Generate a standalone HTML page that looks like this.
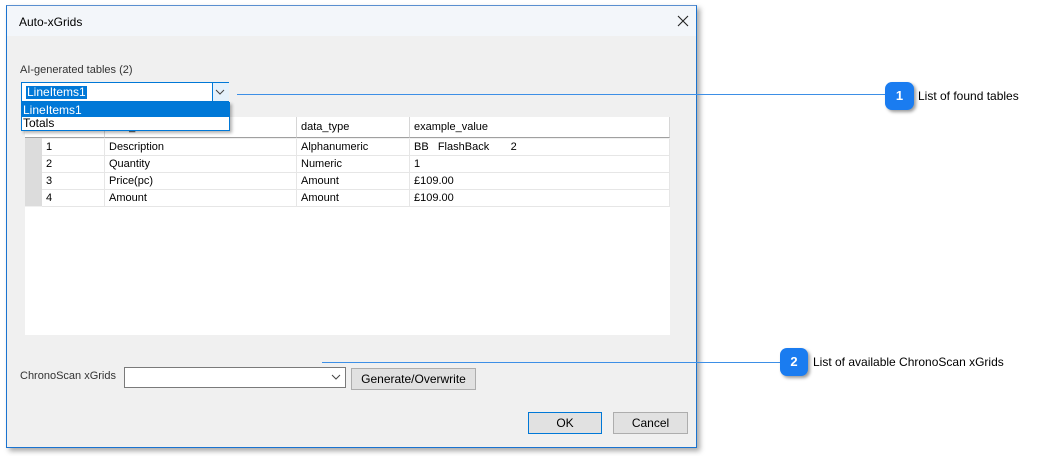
<!DOCTYPE html>
<html><head><style>
body{margin:0;width:1042px;height:456px;background:#fff;position:relative;overflow:hidden;font-family:"Liberation Sans",sans-serif;font-size:11px;color:#000}
.a{position:absolute}
.dlg{left:6px;top:5px;width:689px;height:441px;background:#f0f0f0;border:1px solid #1a73d0;border-top-color:#5a8fd0;box-shadow:3px 3px 5px rgba(0,0,0,.35)}
.title{left:0;top:0;width:689px;height:30px;background:#f3f6fa}
.grid{left:18px;top:111px;width:645px;height:218px;background:#f0f0f0}
.cell{position:absolute;height:17px;line-height:17px;padding-left:4px;box-sizing:border-box;background:#fff;border-right:1px solid #e6e6e6;border-bottom:1px solid #e6e6e6}
.hd{position:absolute;height:21px;line-height:21px;padding-left:4px;box-sizing:border-box;background:#fff;border-right:1px solid #d6d6d6;border-bottom:1px solid #a0a0a0}
.btn{position:absolute;background:#e1e1e1;border:1px solid #adadad;text-align:center;box-sizing:border-box;font-size:12px}
.badge{position:absolute;background:#1a7cf0;border-radius:7px;color:#fff;font-weight:bold;font-size:13px;text-align:center;box-shadow:2px 2px 3px rgba(0,0,0,.4)}
.ln{position:absolute;height:1px;background:#3d8fe6}
</style></head><body>
<div class="a dlg">
 <div class="a title"></div>
 <div class="a" style="left:12px;top:9px;font-size:12px">Auto-xGrids</div>
 <svg class="a" style="left:670px;top:9px" width="12" height="12"><path d="M1 1L11 11M11 1L1 11" stroke="#222" stroke-width="1.1"/></svg>
 <div class="a" style="left:13px;top:58px;color:#333">AI-generated tables (2)</div>
 <div class="a grid">
  <div class="a" style="left:0;top:21px;width:17px;height:68px;background:#dcdcdc"></div>
  <div class="hd" style="left:0;top:0;width:17px;border-right:none"></div>
  <div class="hd" style="left:17px;top:0;width:63px">#</div>
  <div class="hd" style="left:80px;top:0;width:192px">field_name</div>
  <div class="hd" style="left:272px;top:0;width:113px">data_type</div>
  <div class="hd" style="left:385px;top:0;width:260px">example_value</div>
  <div class="cell" style="left:17px;top:22px;width:63px">1</div><div class="cell" style="left:80px;top:22px;width:192px">Description</div><div class="cell" style="left:272px;top:22px;width:113px">Alphanumeric</div><div class="cell" style="left:385px;top:22px;width:260px;white-space:pre">BB   FlashBack       2</div>
  <div class="cell" style="left:17px;top:39px;width:63px">2</div><div class="cell" style="left:80px;top:39px;width:192px">Quantity</div><div class="cell" style="left:272px;top:39px;width:113px">Numeric</div><div class="cell" style="left:385px;top:39px;width:260px">1</div>
  <div class="cell" style="left:17px;top:56px;width:63px">3</div><div class="cell" style="left:80px;top:56px;width:192px">Price(pc)</div><div class="cell" style="left:272px;top:56px;width:113px">Amount</div><div class="cell" style="left:385px;top:56px;width:260px">£109.00</div>
  <div class="cell" style="left:17px;top:73px;width:63px">4</div><div class="cell" style="left:80px;top:73px;width:192px">Amount</div><div class="cell" style="left:272px;top:73px;width:113px">Amount</div><div class="cell" style="left:385px;top:73px;width:260px">£109.00</div>
  <div class="a" style="left:0;top:90px;width:645px;height:128px;background:#fff"></div>
 </div>
 <div class="a" style="left:14px;top:76px;width:208px;height:20px;background:#fff;border:1px solid #0078d7;box-sizing:border-box"></div>
 <div class="a" style="left:19px;top:80px;background:#0078d7;color:#fff;font-size:12px;line-height:13px;padding:0 1px">LineItems1</div>
 <div class="a" style="left:205px;top:77px;width:16px;height:18px;background:#e5f1fb;border-left:1px solid #0078d7"></div>
 <svg class="a" style="left:208px;top:83px" width="10" height="6"><path d="M1 1L5 5L9 1" stroke="#444" fill="none"/></svg>
 <div class="a" style="left:14px;top:96px;width:209px;height:29px;background:#fff;border:1px solid #0078d7;box-sizing:border-box;box-shadow:2px 2px 3px rgba(0,0,0,.3)">
  <div style="background:#0078d7;color:#fff;height:14px;line-height:14px;padding-left:1px;font-size:12px">LineItems1</div>
  <div style="height:13px;line-height:13px;padding-left:1px;font-size:12px">Totals</div>
 </div>
 <div class="a" style="left:13px;top:364px;color:#333">ChronoScan xGrids</div>
 <div class="a" style="left:117px;top:361px;width:222px;height:21px;background:#fff;border:1px solid #7a7a7a;box-sizing:border-box"></div>
 <svg class="a" style="left:324px;top:368px" width="10" height="6"><path d="M1 1L5 5L9 1" stroke="#444" fill="none"/></svg>
 <div class="btn" style="left:344px;top:362px;width:125px;height:22px;line-height:20px">Generate/Overwrite</div>
 <div class="btn" style="left:521px;top:406px;width:74px;height:22px;line-height:20px;border-color:#0078d7">OK</div>
 <div class="btn" style="left:606px;top:406px;width:75px;height:22px;line-height:20px">Cancel</div>
</div>
<div class="ln" style="left:237px;top:94px;width:650px"></div>
<div class="badge" style="left:885px;top:82px;width:29px;height:28px;line-height:28px">1</div>
<div class="a" style="left:918px;top:89px;font-size:12px">List of found tables</div>
<div class="ln" style="left:322px;top:362px;width:460px"></div>
<div class="badge" style="left:780px;top:348px;width:28px;height:28px;line-height:28px">2</div>
<div class="a" style="left:813px;top:355px;font-size:12px">List of available ChronoScan xGrids</div>
</body></html>
